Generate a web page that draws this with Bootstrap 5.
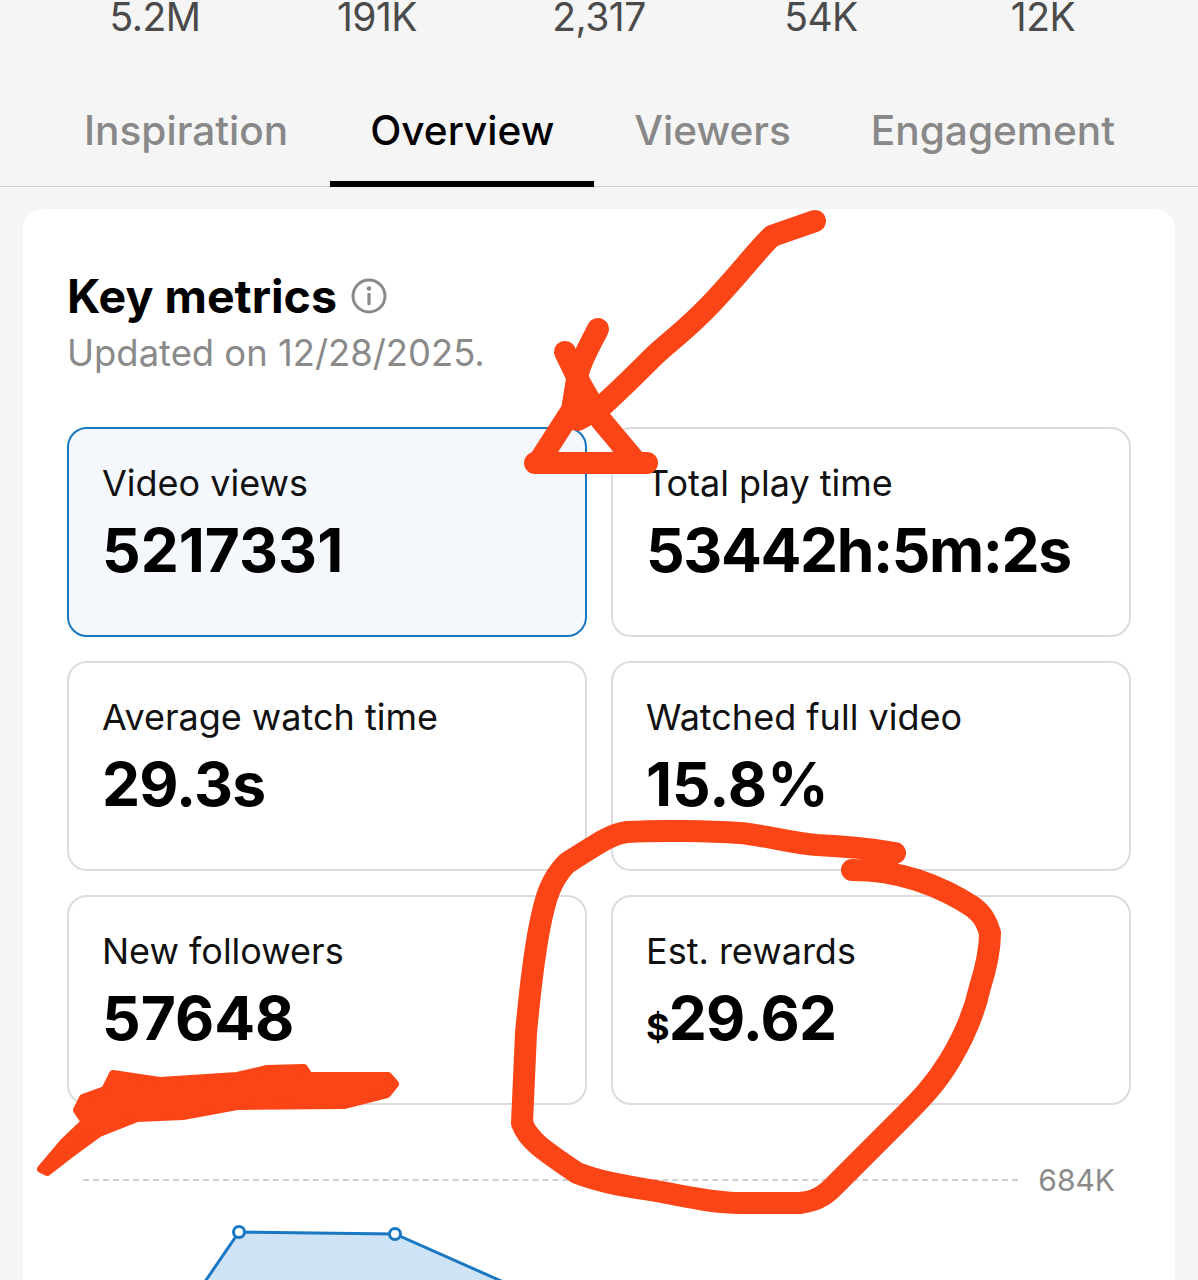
<!DOCTYPE html>
<html lang="en">
<head>
  <meta charset="UTF-8" />
  <meta name="viewport" content="width=device-width, initial-scale=1.0"/>
  <title>Analytics</title>
  <link href="https://cdn.jsdelivr.net/npm/bootstrap@5.3.0/dist/css/bootstrap.min.css" rel="stylesheet"/>
  <style>
    html, body { height: 1280px; overflow: hidden; }
    body {
      position: relative;
      background: #f5f5f5;
      font-family: Inter, "Liberation Sans", sans-serif;
      color: #000;
    }

    /* Top numbers */
    .stat-row { height: 64px; padding: 0 44px; }
    .stat-cell {
      flex: 1 1 0;
      text-align: center;
      font-size: 39px;
      line-height: 34px;
      color: #4a4a4a;
      letter-spacing: -0.5px;
    }

    /* Tabs */
    .tab-row { height: 123px; padding: 0 0 0 44px; border-bottom: 1px solid #cfcfcf; }
    .tab-item {
      display: flex;
      align-items: center;
      padding: 18px 40px 0;
      height: 123px;
      margin-bottom: -1px;
      font-size: 40.6px;
      font-weight: 500;
      color: #888;
      border-bottom: 6px solid transparent;
      text-decoration: none;
      white-space: nowrap;
    }
    .tab-item:first-child { padding-right: 42px; }
    .tab-item.active { color: #000; border-bottom-color: #000; }

    /* Main card */
    .metrics-panel {
      margin: 22px 23px 0;
      height: 1100px;
      padding: 59px 44px 0;
      background: #fff;
      border-radius: 20px;
    }
    .panel-title { font-size: 46.5px; font-weight: 700; line-height: 56px; margin: 0; }
    .panel-head { gap: 14px; }
    .panel-sub { font-size: 36.4px; line-height: 46px; margin-top: 6px; color: #8a8a8a; }

    .metric-grid { display: grid; grid-template-columns: 1fr 1fr; gap: 24px; margin-top: 51px; }
    .metric-box {
      height: 210px;
      padding: 32px 33px;
      border: 2px solid #dcdcdc;
      border-radius: 20px;
    }
    .metric-box.selected { background: #f4f7fc; border-color: #1a78c2; }
    .metric-label { font-size: 36px; line-height: 44px; color: #111; }
    .metric-value { font-size: 60.5px; line-height: 70px; font-weight: 700; margin-top: 10px; }
    .metric-value.tight { letter-spacing: -1.4px; }
    .metric-value.snug { letter-spacing: -0.8px; }
    .metric-value small { font-size: 36px; }

    /* Chart */
    .chart-head { margin-top: 53px; padding: 0 16px; gap: 20px; }
    .dash-line { flex: 1; border-top: 2px dashed #cfcfcf; }
    .chart-max { font-size: 30px; line-height: 44px; color: #8a8a8a; }
    .chart-svg { display: block; width: 1064px; height: 120px; }

    /* Red marker drawn over the screenshot */
    .scribble { position: absolute; left: 0; top: 0; width: 1198px; height: 1280px; pointer-events: none; }
    .scribble path { fill: none; stroke: #fb4516; stroke-width: 22; stroke-linecap: round; stroke-linejoin: round; }
    .scribble path.blob { fill: #fb4516; stroke-width: 8; }
  </style>
</head>
<body>

<!-- Totals -->
<div class="stat-row d-flex">
  <div class="stat-cell">5.2M</div>
  <div class="stat-cell">191K</div>
  <div class="stat-cell">2,317</div>
  <div class="stat-cell">54K</div>
  <div class="stat-cell">12K</div>
</div>

<!-- Tabs -->
<div class="tab-row d-flex">
  <a class="tab-item" href="#">Inspiration</a>
  <a class="tab-item active" href="#">Overview</a>
  <a class="tab-item" href="#">Viewers</a>
  <a class="tab-item" href="#">Engagement</a>
</div>

<!-- Key metrics -->
<div class="metrics-panel">
  <div class="panel-head d-flex align-items-center">
    <h2 class="panel-title">Key metrics</h2>
    <svg width="36" height="36" viewBox="0 0 36 36" aria-hidden="true">
      <circle cx="18" cy="18" r="16" fill="none" stroke="#8a8a8a" stroke-width="3"/>
      <circle cx="18" cy="10.5" r="2.2" fill="#8a8a8a"/>
      <rect x="16.4" y="15" width="3.2" height="12" rx="1" fill="#8a8a8a"/>
    </svg>
  </div>
  <div class="panel-sub">Updated on 12/28/2025.</div>

  <div class="metric-grid">
    <div class="metric-box selected">
      <div class="metric-label">Video views</div>
      <div class="metric-value">5217331</div>
    </div>
    <div class="metric-box">
      <div class="metric-label">Total play time</div>
      <div class="metric-value tight">53442h:5m:2s</div>
    </div>
    <div class="metric-box">
      <div class="metric-label">Average watch time</div>
      <div class="metric-value snug">29.3s</div>
    </div>
    <div class="metric-box">
      <div class="metric-label">Watched full video</div>
      <div class="metric-value">15.8%</div>
    </div>
    <div class="metric-box">
      <div class="metric-label">New followers</div>
      <div class="metric-value">57648</div>
    </div>
    <div class="metric-box">
      <div class="metric-label">Est. rewards</div>
      <div class="metric-value snug"><small>$</small>29.62</div>
    </div>
  </div>

  <!-- Chart, cut off by the bottom of the screen -->
  <div class="chart-head d-flex align-items-center">
    <div class="dash-line"></div>
    <div class="chart-max">684K</div>
  </div>
  <svg class="chart-svg" viewBox="0 0 1064 120" aria-hidden="true">
    <path d="M124 100 L172 30 L328 32 L450 86 L450 120 L124 120 Z" fill="#cfe3f7"/>
    <path d="M124 100 L172 30 L328 32 L450 86" fill="none" stroke="#1a78c2" stroke-width="3"/>
    <circle cx="172" cy="30" r="5.5" fill="#fff" stroke="#1a78c2" stroke-width="3"/>
    <circle cx="328" cy="32" r="5.5" fill="#fff" stroke="#1a78c2" stroke-width="3"/>
  </svg>
</div>

<!-- Hand-drawn annotations -->
<svg class="scribble" viewBox="0 0 1198 1280" aria-hidden="true">
  <path d="M815 221 L772 236 C755 252 735 280 703 312 C680 335 665 345 652 358 C635 375 620 390 601 407 L578 420"/>
  <path d="M598 329 C590 345 582 358 578 373 L572 410 L538 463"/>
  <path d="M565 352 L581 385 L601 420 L637 463"/>
  <path d="M535 463 L647 463"/>
  <path d="M895 853 C860 847 840 846 817 845 C790 843 770 836 740 833 C710 831 660 830 627 832 C612 834 603 840 567 863 C550 880 545 900 540 925 C534 955 530 990 526 1033 L522 1123 C528 1140 543 1150 577 1173 C600 1182 625 1186 650 1190 C680 1195 710 1203 740 1203 L800 1203 C815 1201 822 1197 830 1190 L900 1120 C920 1100 935 1085 950 1060 C965 1035 975 1010 980 987 C987 965 990 950 990 933 C986 920 982 914 973 907 C955 895 935 886 917 880 C895 873 875 870 852 870"/>
  <path class="blob" d="M113 1074 L160 1081 L237 1076 L267 1069 L304 1068 L309 1076 L388 1076 L395 1084 L387 1094 L344 1105 L237 1106 L183 1116 L137 1118 L99 1133 L69 1155 L47 1172 L41 1169 L63 1143 L85 1122 L77 1110 L83 1098 L105 1090 Z"/>
</svg>

<script src="https://cdn.jsdelivr.net/npm/bootstrap@5.3.0/dist/js/bootstrap.bundle.min.js"></script>
</body>
</html>
